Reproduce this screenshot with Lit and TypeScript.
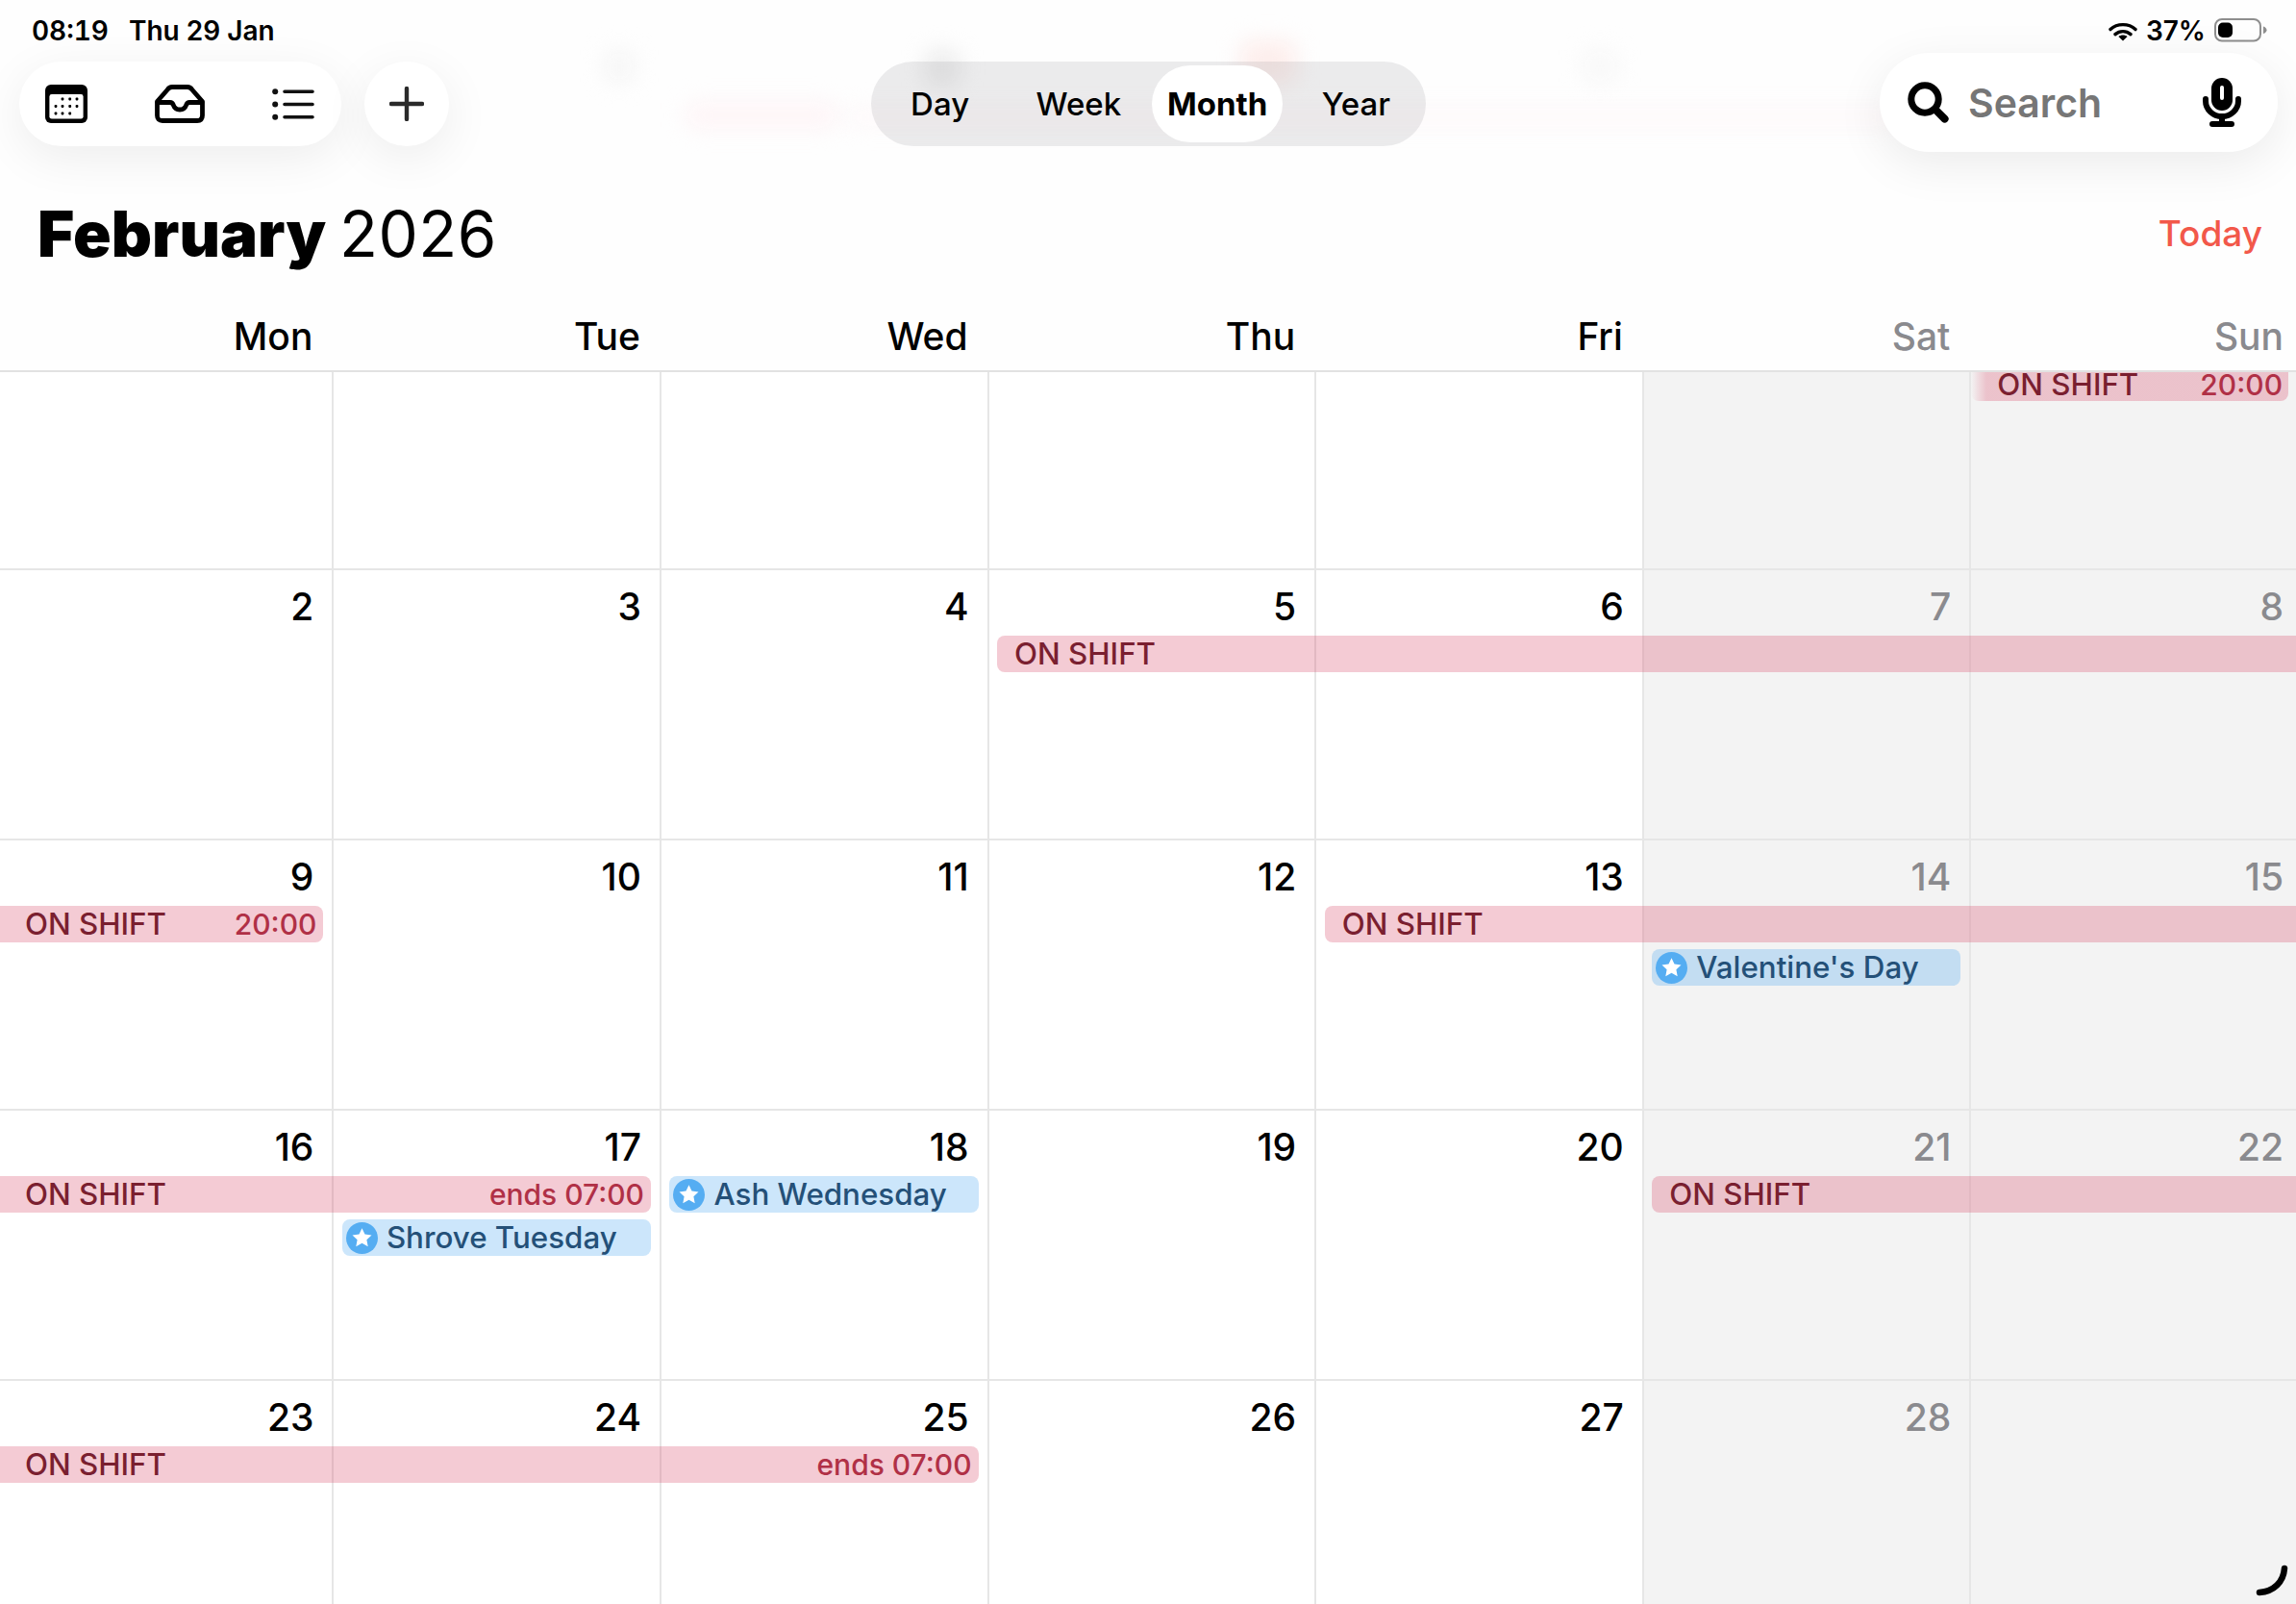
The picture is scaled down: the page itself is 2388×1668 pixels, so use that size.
import { LitElement, html, css, svg, nothing } from 'lit';
import { customElement } from 'lit/decorators.js';

type CalEvent = {
  kind: 'shift' | 'holiday';
  col: number;
  span: number;
  row?: number;
  label?: string;
  time?: string;
  cont?: boolean; // continues from previous week, flat left edge
  open?: boolean; // runs on past the week, flat right edge
  fade?: boolean;
};

type Week = { days: number[]; events: CalEvent[]; cls: string };

const WEEKS: Week[] = [
  {
    cls: 'first',
    days: [],
    events: [{ kind: 'shift', col: 7, span: 1, label: 'ON SHIFT', time: '20:00', fade: true }],
  },
  {
    cls: '',
    days: [2, 3, 4, 5, 6, 7, 8],
    events: [{ kind: 'shift', col: 4, span: 4, label: 'ON SHIFT', open: true }],
  },
  {
    cls: '',
    days: [9, 10, 11, 12, 13, 14, 15],
    events: [
      { kind: 'shift', col: 1, span: 1, label: 'ON SHIFT', time: '20:00', cont: true },
      { kind: 'shift', col: 5, span: 3, label: 'ON SHIFT', open: true },
      { kind: 'holiday', col: 6, span: 1, row: 4, label: "Valentine's Day" },
    ],
  },
  {
    cls: '',
    days: [16, 17, 18, 19, 20, 21, 22],
    events: [
      { kind: 'shift', col: 1, span: 2, label: 'ON SHIFT', time: 'ends 07:00', cont: true },
      { kind: 'holiday', col: 3, span: 1, label: 'Ash Wednesday' },
      { kind: 'holiday', col: 2, span: 1, row: 4, label: 'Shrove Tuesday' },
      { kind: 'shift', col: 6, span: 2, label: 'ON SHIFT', open: true },
    ],
  },
  {
    cls: 'last',
    days: [23, 24, 25, 26, 27, 28, 0],
    events: [{ kind: 'shift', col: 1, span: 3, label: 'ON SHIFT', time: 'ends 07:00', cont: true }],
  },
];

const WEEKDAYS = ['Mon', 'Tue', 'Wed', 'Thu', 'Fri', 'Sat', 'Sun'];

const star = svg`<path fill="#fff" d="M16.5 6.2l3 6.4 7 .9-5.1 4.8 1.3 6.9-6.2-3.4-6.2 3.4 1.3-6.9-5.1-4.8 7-.9z"/>`;

@customElement('app-root')
export class AppRoot extends LitElement {
  static styles = css`
    :host {
      display: block;
      position: relative;
      width: 2388px;
      height: 1668px;
      overflow: hidden;
      background: #fff;
      color: #000;
      font-family: Inter, 'Liberation Sans', sans-serif;
    }

    /* top chrome */
    .chrome {
      position: relative;
      height: 385px;
      border-bottom: 2px solid #e2e2e2;
      background: #fefefe;
      overflow: hidden;
    }
    .smudge {
      position: absolute;
      filter: blur(11px);
      border-radius: 12px;
    }
    .status {
      position: relative;
      display: flex;
      justify-content: space-between;
      height: 55px;
      padding: 16px 30px 0 33px;
      box-sizing: border-box;
      font-size: 28px;
      font-weight: 600;
      line-height: 33px;
    }
    .status .time {
      font-variant-numeric: tabular-nums;
    }
    .status .date {
      margin-left: 21px;
    }
    .status-right {
      display: flex;
      align-items: flex-start;
      gap: 9px;
    }
    .status-right svg {
      display: block;
    }
    .wifi {
      margin-top: 7px;
    }
    .battery {
      margin-top: 3px;
    }

    .toolbar {
      position: relative;
      display: grid;
      grid-template-columns: 1fr 576px 1fr;
      padding: 0 19px 0 20px;
      align-items: start;
    }
    .tools {
      display: flex;
      gap: 24px;
      margin-top: 9px;
    }
    .pill {
      display: flex;
      align-items: center;
      height: 88px;
      padding: 0 10px 0 9px;
      gap: 38px;
      border-radius: 44px;
      background: #fff;
      box-shadow: 0 12px 50px rgba(0, 0, 0, 0.07);
    }
    .tool {
      display: flex;
      justify-content: center;
      width: 80px;
    }
    .add {
      display: flex;
      align-items: center;
      justify-content: center;
      width: 88px;
      height: 88px;
      border-radius: 50%;
      background: #fff;
      box-shadow: 0 12px 50px rgba(0, 0, 0, 0.07);
    }
    .segments {
      display: flex;
      height: 88px;
      margin: 9px 0 0 -1px;
      border-radius: 44px;
      background: rgba(120, 120, 128, 0.14);
    }
    .segment {
      flex: 1;
      display: flex;
      align-items: center;
      justify-content: center;
      margin: 4px;
      border-radius: 40px;
      font-size: 33px;
      font-weight: 500;
    }
    .segment.active {
      background: #fff;
      font-weight: 700;
    }
    .search {
      display: flex;
      align-items: center;
      justify-self: end;
      width: 414px;
      height: 103px;
      padding: 0 38px 0 29px;
      box-sizing: border-box;
      border-radius: 52px;
      background: #fff;
      box-shadow: 0 12px 50px rgba(0, 0, 0, 0.08);
      font-size: 41px;
      font-weight: 600;
      color: #767676;
    }
    .search span {
      flex: 1;
      margin-left: 20px;
    }

    .title-row {
      position: relative;
      display: flex;
      justify-content: space-between;
      align-items: baseline;
      height: 78px;
      padding: 47px 35px 0 39px;
    }
    .title {
      font-size: 65.5px;
      line-height: 78px;
      font-weight: 400;
      letter-spacing: 0.5px;
      word-spacing: -5px;
    }
    .title b {
      font-weight: 900;
      letter-spacing: 0;
    }
    .today {
      font-size: 37px;
      font-weight: 500;
      color: #f2584a;
      position: relative;
      top: -11px;
    }

    .weekdays,
    .week {
      display: grid;
      grid-template-columns: 345.4px repeat(5, 340.6px) 1fr;
    }
    .weekdays {
      position: relative;
      margin-top: 44px;
      font-size: 39px;
      font-weight: 500;
      line-height: 46px;
    }
    .weekdays div {
      text-align: right;
      padding-right: 20px;
    }
    .weekdays div:last-child {
      padding-right: 13px;
    }
    .weekdays .weekend {
      color: #8a8a8e;
    }

    /* month grid */
    .week {
      height: 279px;
      border-top: 2px solid #e6e6e6;
      grid-template-rows: 68px 38px 7px 38px 1fr;
    }
    .week.first {
      height: 204px;
      border-top: none;
      grid-template-rows: 0 30px 7px 38px 1fr;
    }
    .week.last {
      height: 232px;
    }
    .day {
      grid-row: 1 / -1;
      padding: 15px 19px 0 0;
      border-left: 2px solid #e6e6e6;
      font-size: 39px;
      font-weight: 500;
      line-height: 46px;
      text-align: right;
    }
    .day:first-child {
      border-left: none;
    }
    .day.weekend {
      background: #f3f3f3;
      color: #8a8a8e;
    }
    .day:nth-child(7) {
      padding-right: 13px;
    }

    .event {
      display: flex;
      align-items: center;
      min-width: 0;
      margin: 0 9px 0 10.5px;
      border-radius: 8px;
      font-size: 31.3px;
      line-height: 36px;
      font-weight: 500;
      white-space: nowrap;
      overflow: hidden;
    }
    .shift {
      justify-content: space-between;
      padding: 0 7px 0 18px;
      background: rgba(218, 82, 112, 0.3);
      color: #7a1f30;
    }
    .shift .time {
      color: #b03046;
      font-size: 30px;
      font-weight: 450;
    }
    .shift.cont {
      margin-left: 0;
      padding-left: 26px;
      border-top-left-radius: 0;
      border-bottom-left-radius: 0;
    }
    .shift.open {
      margin-right: 0;
      border-top-right-radius: 0;
      border-bottom-right-radius: 0;
    }
    .shift.fade {
      margin: 0 8px 0 2px;
      padding: 0 6px 4px 27px;
      box-sizing: border-box;
      line-height: 26px;
      overflow: visible;
      border-radius: 0 0 8px 8px;
      background: linear-gradient(90deg, rgba(218, 82, 112, 0), rgba(218, 82, 112, 0.3) 16px);
    }
    .holiday {
      padding-left: 4px;
      gap: 9px;
      background: rgba(85, 173, 242, 0.3);
      color: #245078;
    }
    .holiday svg {
      flex: none;
    }

    .corner {
      position: absolute;
      right: 4px;
      bottom: 2px;
    }
  `;

  private renderEvent(e: CalEvent) {
    const cls = ['event', e.kind, e.cont ? 'cont' : '', e.open ? 'open' : '', e.fade ? 'fade' : ''].join(' ');
    const place = `grid-column:${e.col} / span ${e.span};grid-row:${e.row ?? 2}`;
    if (e.kind === 'holiday') {
      return html`<div class=${cls} style=${place}>
        <svg width="33" height="33" viewBox="0 0 33 33"><circle cx="16.5" cy="16.5" r="16.5" fill="#55adf2" />${star}</svg>
        <span>${e.label}</span>
      </div>`;
    }
    return html`<div class=${cls} style=${place}>
      <span>${e.label}</span>
      ${e.time ? html`<span class="time">${e.time}</span>` : nothing}
    </div>`;
  }

  private renderWeek(w: Week) {
    return html`<div class="week ${w.cls}">
      ${WEEKDAYS.map(
        (_, i) => html`<div class="day ${i >= 5 ? 'weekend' : ''}" style="grid-column:${i + 1}">${w.days[i] || ''}</div>`,
      )}
      ${w.events.map((e) => this.renderEvent(e))}
    </div>`;
  }

  private calendarDots() {
    const dots: [number, number][] = [
      [18, 15], [25.7, 15], [33, 15],
      [11, 22.5], [18, 22.5], [25.7, 22.5], [33, 22.5],
      [11, 30], [18, 30], [25.7, 30],
    ];
    return dots.map(([x, y]) => svg`<rect x=${x - 1.4} y=${y - 1.4} width="2.8" height="2.8" rx="0.8" fill="#000" />`);
  }

  render() {
    return html`
      <div class="chrome">
        <div class="smudge" style="left:628px;top:52px;width:32px;height:34px;background:#f6f6f6"></div>
        <div class="smudge" style="left:962px;top:52px;width:36px;height:38px;background:#ececec"></div>
        <div class="smudge" style="left:1290px;top:42px;width:58px;height:46px;background:#fdeeec"></div>
        <div class="smudge" style="left:1646px;top:52px;width:36px;height:34px;background:#f8f8f8"></div>
        <div class="smudge" style="left:712px;top:106px;width:160px;height:28px;background:#fef5f7"></div>
        <div class="smudge" style="left:880px;top:112px;width:1100px;height:20px;background:#fef9fa"></div>

        <div class="status">
          <div><span class="time">08:19</span><span class="date">Thu 29 Jan</span></div>
          <div class="status-right">
            <svg class="wifi" width="30" height="20" viewBox="0 0 30 20">
              <path d="M2 7.6C9 1 21 1 28 7.6M7 12.6c4.6-4 11.4-4 16 0" fill="none" stroke="#000" stroke-width="3.4" stroke-linecap="round" />
              <path d="M15 19.5l-4.6-4.4c2.6-2 6.6-2 9.2 0z" fill="#000" />
            </svg>
            <span>37%</span>
            <svg class="battery" width="55" height="25" viewBox="0 0 55 25">
              <rect x="1" y="1" width="47" height="22.5" rx="7" fill="none" stroke="#8e8e8e" stroke-width="2" />
              <rect x="4" y="4.5" width="15" height="15.5" rx="5" fill="#000" />
              <path d="M51 8.5c2 .6 3.5 2 3.5 3.8s-1.5 3.2-3.5 3.8z" fill="#8e8e8e" />
            </svg>
          </div>
        </div>

        <div class="toolbar">
          <div class="tools">
            <div class="pill">
              <div class="tool">
                <svg width="44" height="40" viewBox="0 0 44 40">
                  <rect width="44" height="40" rx="6" fill="#000" />
                  <rect x="4.4" y="10" width="35.2" height="25.6" rx="2.4" fill="#fff" />
                  ${this.calendarDots()}
                </svg>
              </div>
              <div class="tool">
                <svg width="52" height="40" viewBox="0 0 52 40" fill="none" stroke="#000" stroke-width="4.8" stroke-linejoin="round" stroke-linecap="round">
                  <path d="M2.5 17.5L13 5.5Q15 2.5 18 2.5H34Q37 2.5 39 5.5L49.5 17.5V32Q49.5 37.5 44 37.5H8Q2.5 37.5 2.5 32Z" />
                  <path d="M3 18.5H16C18 18.5 18.6 19.5 19.2 21C20.4 24.4 23 26 26 26S31.6 24.4 32.8 21C33.4 19.5 34 18.5 36 18.5H49" />
                </svg>
              </div>
              <div class="tool">
                <svg width="44" height="33" viewBox="0 0 44 33" stroke="#111" stroke-width="3.6" stroke-linecap="round">
                  <circle cx="3.2" cy="3.2" r="3" fill="#111" stroke="none" />
                  <circle cx="3.2" cy="16.5" r="3" fill="#111" stroke="none" />
                  <circle cx="3.2" cy="29.8" r="3" fill="#111" stroke="none" />
                  <path d="M13 3.2H42M13 16.5H42M13 29.8H42" />
                </svg>
              </div>
            </div>
            <div class="add">
              <svg width="36" height="36" viewBox="0 0 36 36"><path d="M18 2V34M2 18H34" stroke="#2a2a2a" stroke-width="4.4" stroke-linecap="round" /></svg>
            </div>
          </div>

          <div class="segments">
            <div class="segment">Day</div>
            <div class="segment">Week</div>
            <div class="segment active">Month</div>
            <div class="segment">Year</div>
          </div>

          <div class="search">
            <svg width="43" height="43" viewBox="0 0 43 43" fill="none" stroke="#000" stroke-linecap="round">
              <circle cx="18" cy="18" r="14.2" stroke-width="7" />
              <path d="M29 29L38.6 38.6" stroke-width="8" />
            </svg>
            <span>Search</span>
            <svg width="40" height="51" viewBox="0 0 40 51">
              <rect x="9" y="0" width="22" height="34" rx="11" fill="#000" />
              <rect x="18" y="8" width="4" height="15" rx="2" fill="#fff" />
              <path d="M3 22V24A17 16 0 0 0 37 24V22" fill="none" stroke="#000" stroke-width="6" stroke-linecap="round" />
              <path d="M20 41V47" stroke="#000" stroke-width="6" />
              <path d="M10 48H30" stroke="#000" stroke-width="6" stroke-linecap="round" />
            </svg>
          </div>
        </div>

        <div class="title-row">
          <div class="title"><b>February</b> 2026</div>
          <div class="today">Today</div>
        </div>

        <div class="weekdays">
          ${WEEKDAYS.map((d, i) => html`<div class=${i >= 5 ? 'weekend' : ''}>${d}</div>`)}
        </div>
      </div>

      ${WEEKS.map((w) => this.renderWeek(w))}

      <svg class="corner" width="40" height="40" viewBox="0 0 40 40">
        <path d="M32 5C31 19 21 29 6 30" fill="none" stroke="#000" stroke-width="6.5" stroke-linecap="round" />
      </svg>
    `;
  }
}
